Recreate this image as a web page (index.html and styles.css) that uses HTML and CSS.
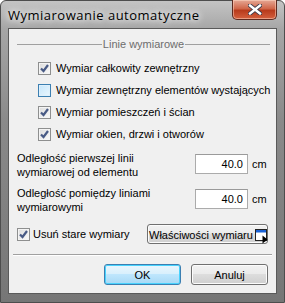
FILE: index.html
```html
<!DOCTYPE html>
<html lang="pl">
<head>
  <meta charset="UTF-8">
  <title>Wymiarowanie automatyczne</title>
  <link rel="stylesheet" href="styles.css">
</head>
<body>
  <div class="window">
    <div class="titlebar">
      <span class="title">Wymiarowanie automatyczne</span>
      <div class="close-btn">
        <svg width="14" height="11" viewBox="0 0 14 11">
          <path d="M2 1.5 L12 9.5 M12 1.5 L2 9.5" stroke="#3b3b4a" stroke-width="4.2" stroke-linecap="square"/>
          <path d="M2 1.5 L12 9.5 M12 1.5 L2 9.5" stroke="#fff" stroke-width="2.4" stroke-linecap="square"/>
        </svg>
      </div>
    </div>

    <div class="client">
      <div class="group-title"><span>Linie wymiarowe</span></div>

      <div class="checks">
        <div class="check-row"><span class="checkbox checked"></span>Wymiar całkowity zewnętrzny</div>
        <div class="check-row"><span class="checkbox hover"></span>Wymiar zewnętrzny elementów wystających</div>
        <div class="check-row"><span class="checkbox checked"></span>Wymiar pomieszczeń i ścian</div>
        <div class="check-row"><span class="checkbox checked"></span>Wymiar okien, drzwi i otworów</div>
      </div>

      <div class="field-row">
        <div class="field-label">Odległość pierwszej linii<br>wymiarowej od elementu</div>
        <div class="field-input">40.0</div>
        <span class="unit">cm</span>
      </div>
      <div class="field-row second">
        <div class="field-label">Odległość pomiędzy liniami<br>wymiarowymi</div>
        <div class="field-input">40.0</div>
        <span class="unit">cm</span>
      </div>

      <div class="bottom-row">
        <div class="check-row"><span class="checkbox checked"></span>Usuń stare wymiary</div>
        <div class="btn props-btn">
          <span class="props-label">Właściwości wymiaru</span>
          <svg class="props-icon" width="13" height="15" viewBox="0 0 13 15">
            <rect x="0.5" y="0.5" width="11" height="11" fill="#fff" stroke="#222"/>
            <rect x="1" y="1" width="10" height="2.5" fill="#1a62d6"/>
            <path d="M7.5 6.5 L7.5 14.5 L12.5 10.5 Z" fill="#000"/>
          </svg>
        </div>
      </div>

      <div class="separator"></div>

      <div class="actions">
        <div class="btn default-btn">OK</div>
        <div class="btn">Anuluj</div>
      </div>
    </div>
  </div>
</body>
</html>
```

FILE: styles.css
```css
body {
  margin: 0;
  background: #fff;
  font-family: "Liberation Sans", Arial, sans-serif;
  font-size: 11px;
  color: #000;
}
.window {
  box-sizing: border-box;
  width: 285px;
  height: 303px;
  padding: 0 7px 8px 7px;
  border: 1px solid #4d4d4d;
  border-radius: 6px 6px 0 0;
  background: linear-gradient(#c4c4c4, #a6a6a6 28px, #8a8a8a 120px, #767676);
  display: flex;
  flex-direction: column;
}
.titlebar {
  height: 27px;
  display: flex;
  align-items: flex-start;
  justify-content: space-between;
}
.title {
  margin-top: 5px;
  font-family: "Open Sans", sans-serif;
  font-size: 13px;
  letter-spacing: 0.5px;
  text-shadow: 0 0 6px #fff, 0 0 10px #fff;
}
.close-btn {
  box-sizing: border-box;
  width: 45px;
  height: 20px;
  margin-top: -1px;
  border: 1px solid #5e2a20;
  border-top: none;
  border-radius: 0 0 5px 5px;
  background: linear-gradient(#e6a895, #d0674a 45%, #b83b1c 55%, #d5603e);
  box-shadow: inset 0 0 0 1px rgba(255, 220, 200, 0.5);
  display: flex;
  align-items: center;
  justify-content: center;
}
.client {
  flex: 1;
  background: #f0f0f0;
  border: 1px solid #5a5a5a;
  display: flex;
  flex-direction: column;
}
.group-title {
  display: flex;
  align-items: center;
  height: 14px;
  margin: 8px 6px 0 8px;
  color: #6d6d6d;
}
.group-title::before, .group-title::after {
  content: "";
  flex: 1;
  height: 1px;
  background: #a0a0a0;
}
.group-title span {
  padding: 0 1px;
}
.checks {
  margin-top: 6px;
  padding-left: 29px;
}
.check-row {
  height: 22px;
  display: flex;
  align-items: center;
}
.checkbox {
  box-sizing: border-box;
  width: 13px;
  height: 13px;
  margin-right: 5px;
  border: 1px solid #8e8f8f;
  background: linear-gradient(135deg, #dcdcdc, #fafafa);
  box-shadow: inset 0 0 0 1px #f4f4f4;
  flex-shrink: 0;
}
.checkbox.checked {
  background-image: url("data:image/svg+xml,%3Csvg xmlns='http://www.w3.org/2000/svg' width='11' height='11'%3E%3Cpath d='M2 5.5 L4.5 8 L9 2' fill='none' stroke='%23485a85' stroke-width='2.2'/%3E%3C/svg%3E"), linear-gradient(135deg, #dcdcdc, #fafafa);
}
.checkbox.hover {
  border-color: #3c7fb1;
  background: linear-gradient(135deg, #c6e6fb, #eaf6fd);
  box-shadow: inset 0 0 0 1px #def0fc;
}
.field-row {
  display: flex;
  align-items: flex-start;
  margin: 6px 0 0 8px;
  height: 28px;
}
.field-row.second {
  margin-top: 7px;
}
.field-label {
  width: 178px;
  line-height: 14px;
}
.field-input {
  box-sizing: border-box;
  width: 53px;
  height: 20px;
  margin-top: 3px;
  padding: 0 4px;
  border: 1px solid #ababab;
  border-top-color: #9a9a9a;
  background: #fff;
  text-align: right;
  line-height: 18px;
}
.unit {
  margin: 3px 0 0 4px;
  line-height: 20px;
}
.bottom-row {
  display: flex;
  justify-content: space-between;
  align-items: center;
  margin: 10px 8px 0 8px;
  height: 20px;
}
.bottom-row .checkbox {
  margin-right: 3px;
}
.btn {
  box-sizing: border-box;
  height: 21px;
  border: 1px solid #707070;
  border-radius: 3px;
  background: linear-gradient(#f2f2f2, #ebebeb 45%, #dddddd 50%, #cfcfcf);
  box-shadow: inset 0 0 0 1px #fcfcfc;
  display: flex;
  align-items: center;
  justify-content: center;
}
.props-btn {
  width: 121px;
  height: 20px;
  gap: 2px;
  padding: 1px 0 0 1px;
  justify-content: flex-start;
  white-space: nowrap;
}
.props-icon {
  flex-shrink: 0;
  margin-top: 3px;
}
.separator {
  height: 1px;
  margin: 10px 4px 0 4px;
  background: #a0a0a0;
  border-bottom: 1px solid #fff;
}
.actions {
  display: flex;
  justify-content: flex-end;
  gap: 10px;
  margin: 8px 8px 0 0;
}
.actions .btn {
  width: 77px;
}
.default-btn {
  border-color: #3c7fb1;
  background: linear-gradient(#eaf6fd, #d9f0fc 45%, #bee6fd 50%, #a7d9f5);
  box-shadow: inset 0 0 0 1px #48d2fd;
}
```
